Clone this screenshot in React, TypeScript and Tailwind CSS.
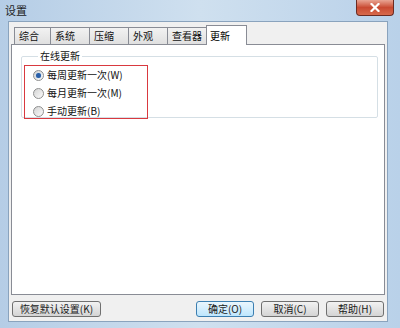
import React, { useState } from 'react'

const font = { fontFamily: '"Noto Sans CJK SC", "Noto Sans", sans-serif' }

const tabs = ['综合', '系统', '压缩', '外观', '查看器', '更新']
const tabWidths = ['w-[36px]', 'w-[39px]', 'w-[39px]', 'w-[39px]', 'w-[39px]', 'w-[41px]']

const options = ['每周更新一次(W)', '每月更新一次(M)', '手动更新(B)']

function Radio({ checked }: { checked: boolean }) {
  return (
    <span className="w-[11px] h-[11px] shrink-0 rounded-full border border-[#8e8f8f] bg-gradient-to-br from-[#d4d4d4] to-[#fbfbfb] flex items-center justify-center">
      {checked && <span className="w-[5px] h-[5px] rounded-full bg-[#2a5fa8] shadow-[0_0_1px_#7fb2e6]" />}
    </span>
  )
}

function Button({ label, primary, className }: { label: string; primary?: boolean; className: string }) {
  return (
    <div
      className={
        'h-[16px] rounded-[3px] border flex items-center justify-center text-[10px] leading-none text-[#1a1a1a] whitespace-nowrap ' +
        (primary
          ? 'border-[#3c7fb1] bg-gradient-to-b from-[#eaf6fd] to-[#bee6fd] '
          : 'border-[#707070] bg-gradient-to-b from-[#f2f2f2] to-[#d4d4d4] ') +
        className
      }
    >
      {label}
    </div>
  )
}

export default function App() {
  const [selected, setSelected] = useState(0)

  return (
    <div
      className="w-[400px] h-[328px] flex flex-col bg-gradient-to-r from-[#b5cde6] via-[#cfe0ef] to-[#b9d1e9] overflow-hidden"
      style={font}
    >
      {/* 标题栏 */}
      <div className="h-[22px] flex items-center justify-between pl-[5px] pr-[6px] relative">
        <span className="text-[11px] text-[#1e1e1e] leading-none">设置</span>
        <div className="absolute right-[6px] top-0 w-[38px] h-[16px] rounded-b-[4px] border border-t-0 border-[#6b2b22] bg-gradient-to-b from-[#e8a493] via-[#c94a32] to-[#d76a4c] flex items-center justify-center">
          <svg width="10" height="9" viewBox="0 0 10 9">
            <path d="M1.5 1 L8.5 8 M8.5 1 L1.5 8" stroke="#fff" strokeWidth="2.2" strokeLinecap="square" />
          </svg>
        </div>
      </div>

      {/* 客户区 */}
      <div className="ml-[8px] mr-[12px] mb-[6px] flex-1 bg-[#f0f0f0] border border-[#8aa3bd] flex flex-col px-[2px] pb-[4px]">
        {/* 选项卡 */}
        <div className="h-[22px] flex items-end pl-[3px]">
          {tabs.map((t, i) =>
            i === tabs.length - 1 ? (
              <div
                key={t}
                className={tabWidths[i] + ' h-[20px] -mb-px z-10 bg-white border border-b-0 border-[#898c95] flex items-center pl-[3px] text-[10px] leading-none text-black whitespace-nowrap'}
              >
                {t}
              </div>
            ) : (
              <div
                key={t}
                className={tabWidths[i] + ' h-[17px] bg-gradient-to-b from-[#f2f2f2] to-[#e0e0e0] border border-b-0 border-r-0 border-[#898c95] flex items-center pl-[4px] text-[10px] leading-none text-[#111] whitespace-nowrap'}
              >
                {t}
              </div>
            )
          )}
        </div>

        {/* 面板 */}
        <div className="h-[251px] bg-white border border-[#898c95] pt-[5px] pl-[9px] pr-[6px]">
          <fieldset className="relative h-[68px] border border-[#d5dfe5] rounded-[2px] px-0">
            <legend className="ml-[16px] px-[2px] text-[10px] leading-[12px] text-[#111] whitespace-nowrap">
              在线更新
            </legend>
            <div className="ml-[2px] mt-[3px] w-[124px] h-[54px] border border-[#d9393f] flex flex-col pt-[2px] pl-[8px] gap-[4px]">
              {options.map((o, i) => (
                <div
                  key={o}
                  className="h-[14px] flex items-center gap-[3px] cursor-default"
                  onClick={() => setSelected(i)}
                >
                  <Radio checked={selected === i} />
                  <span className="text-[10px] leading-none text-[#111] whitespace-nowrap">{o}</span>
                </div>
              ))}
            </div>
          </fieldset>
        </div>

        {/* 底部按钮 */}
        <div className="flex items-center mt-[6px] pl-[1px]">
          <Button label="恢复默认设置(K)" className="w-[89px]" />
          <div className="flex-1" />
          <Button label="确定(O)" primary className="w-[58px]" />
          <Button label="取消(C)" className="w-[58px] ml-[7px]" />
          <Button label="帮助(H)" className="w-[58px] ml-[7px] mr-[1px]" />
        </div>
      </div>
    </div>
  )
}
